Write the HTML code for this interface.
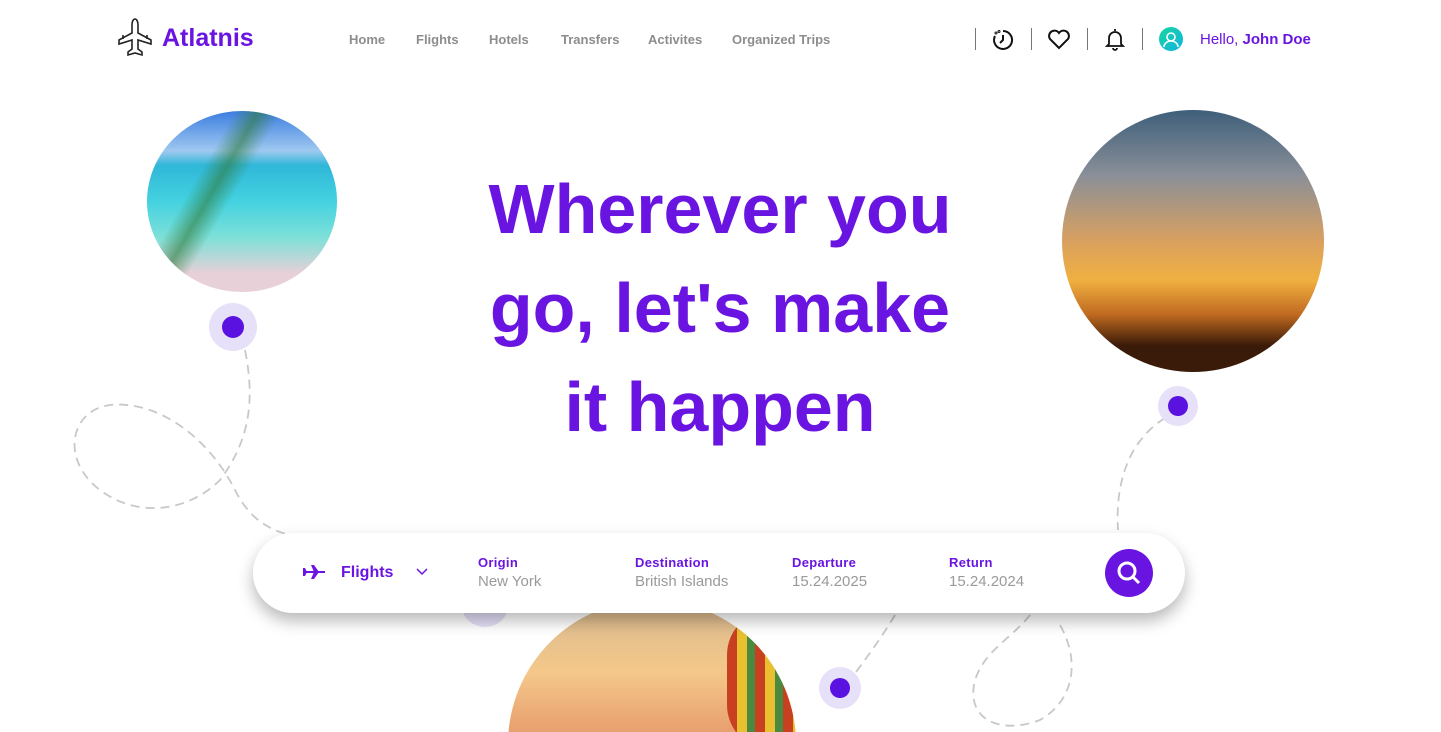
<!DOCTYPE html>
<html style="width:1441px;height:732px;overflow:hidden"><head><meta charset="utf-8"><style>
*{margin:0;padding:0;box-sizing:border-box}
body{width:1441px;height:732px;overflow:hidden;background:#fff;font-family:"Liberation Sans",sans-serif;position:relative}
.abs{position:absolute}
.nav a{position:absolute;top:32px;font-size:13px;font-weight:bold;color:#8d8d8d}
.sep{position:absolute;top:28px;width:1px;height:22px;background:#777}
.circ{position:absolute;border-radius:50%;overflow:hidden}
.dot{position:absolute;border-radius:50%;background:#e6e0f8}
.dot i{position:absolute;left:50%;top:50%;width:22px;height:22px;margin:-11px 0 0 -11px;border-radius:50%;background:#5a12e0}
h1{position:absolute;left:400px;width:640px;top:160px;text-align:center;color:#6a14e2;font-size:70px;line-height:99px;font-weight:bold}
.lbl{position:absolute;top:555px;font-size:13px;font-weight:bold;color:#6a14e2;letter-spacing:.3px}
.val{position:absolute;top:573px;font-size:15px;color:#9a9a9a}
</style></head><body>
<svg class="abs" style="left:0;top:0" width="1441" height="732" fill="none" stroke="#c8c8c8" stroke-width="1.8" stroke-dasharray="9 6">
<path d="M245 350 C255 400 250 440 220 480 C190 510 140 520 100 490 C60 460 70 410 110 405 C160 400 210 440 235 490 C250 520 270 530 290 535"/>
<path d="M1165 418 C1130 440 1115 480 1118 530"/>
<path d="M895 615 C880 640 865 660 850 680"/>
<path d="M1030 615 C1010 640 985 650 975 680 C965 720 1000 735 1040 720 C1075 700 1080 660 1060 625"/>
</svg>
<svg class="abs" style="left:116px;top:17px" width="38" height="40" viewBox="0 0 38 40" fill="none" stroke="#222" stroke-width="1.6"><path d="M19 2c-2 0-3 3-3 6v8L3 23v4l13-4v9l-4 3v3l7-2 7 2v-3l-4-3v-9l13 4v-4L22 16V8c0-3-1-6-3-6z"/><path d="M7 18v4M31 18v4"/></svg>
<div class="abs" style="left:162px;top:24px;font-size:25px;font-weight:bold;color:#6a14e2">Atlatnis</div>
<div class="nav"><a style="left:349px">Home</a><a style="left:416px">Flights</a><a style="left:489px">Hotels</a><a style="left:561px">Transfers</a><a style="left:648px">Activites</a><a style="left:732px">Organized Trips</a></div>
<div class="sep" style="left:975px"></div><div class="sep" style="left:1031px"></div><div class="sep" style="left:1087px"></div><div class="sep" style="left:1142px"></div>
<svg class="abs" style="left:991px;top:28px" width="24" height="24" viewBox="0 0 24 24" fill="none" stroke="#111" stroke-width="2"><path d="M12 3a9 9 0 1 1-8 5" /><path d="M12 7v5l-3 3"/><circle cx="5" cy="5" r=".5"/><circle cx="8" cy="3.5" r=".5"/></svg>
<svg class="abs" style="left:1047px;top:28px" width="24" height="22" viewBox="0 0 24 22" fill="none" stroke="#111" stroke-width="2"><path d="M12 20L3 11a5 5 0 0 1 9-6 5 5 0 0 1 9 6z"/></svg>
<svg class="abs" style="left:1104px;top:27px" width="22" height="24" viewBox="0 0 22 24" fill="none" stroke="#111" stroke-width="1.8"><path d="M11 2v2M5 17V11a6 6 0 0 1 12 0v6l2 2H3z"/><path d="M9 21a2 2 0 0 0 4 0"/></svg>
<div class="abs" style="left:1159px;top:27px;width:24px;height:24px;border-radius:50%;background:linear-gradient(135deg,#17d6a0,#12b3e0)"></div>
<svg class="abs" style="left:1159px;top:27px" width="24" height="24" fill="none" stroke="#fff" stroke-width="1.6"><circle cx="12" cy="10" r="4"/><path d="M5 20a7 6 0 0 1 14 0"/></svg>
<div class="abs" style="left:1200px;top:31px;font-size:15px;color:#6a14e2">Hello, <b>John Doe</b></div>
<div class="circ" style="left:147px;top:111px;width:190px;height:181px;background:linear-gradient(180deg,#3c7ee0 0%,#9fc8f0 22%,#2fb7d8 30%,#44d2e0 50%,#7ee0d8 70%,#e8d0d8 90%);"></div>
<div class="circ" style="left:147px;top:111px;width:190px;height:181px;background:linear-gradient(120deg,transparent 30%,#2f7a3a 38%,transparent 46%);opacity:.6"></div>
<div class="circ" style="left:1062px;top:110px;width:262px;height:262px;background:linear-gradient(180deg,#3e5f7a 0%,#8a8f98 25%,#d9a060 50%,#f0b040 65%,#c06a20 78%,#3a1a08 90%)"></div>
<div class="abs" style="left:508px;top:600px;width:288px;height:132px;overflow:hidden">
<div class="circ" style="left:0;top:0;width:288px;height:288px;background:linear-gradient(180deg,#d8b890 0%,#f4c88a 25%,#e9a070 45%,#c8b8c8 70%)">
<div class="abs" style="left:219px;top:10px;width:90px;height:140px;border-radius:45px;background:repeating-linear-gradient(90deg,#c84020 0 10px,#e8c030 10px 20px,#4a8a40 20px 28px)"></div>
</div></div>
<div class="dot" style="left:209px;top:303px;width:48px;height:48px"><i></i></div>
<div class="dot" style="left:1158px;top:386px;width:40px;height:40px"><i style="width:20px;height:20px;margin:-10px 0 0 -10px"></i></div>
<div class="dot" style="left:819px;top:667px;width:42px;height:42px"><i style="width:20px;height:20px;margin:-10px 0 0 -10px"></i></div>
<div class="dot" style="left:462px;top:585px;width:46px;height:42px"></div>
<h1>Wherever you<br>go, let's make<br>it happen</h1>
<div class="abs" style="left:253px;top:533px;width:932px;height:80px;border-radius:40px;background:#fff;box-shadow:0 8px 16px rgba(0,0,0,.28)"></div>
<svg class="abs" style="left:302px;top:564px" width="24" height="16" viewBox="0 0 24 16" fill="#6a14e2"><path d="M1 7h22v2H1zM9 1h3l5 7-5 7H9l3-7zM1 4h2l2 4-2 4H1z"/></svg>
<div class="abs" style="left:341px;top:564px;font-size:16px;font-weight:bold;color:#6a14e2">Flights</div>
<svg class="abs" style="left:415px;top:567px" width="14" height="10" fill="none" stroke="#6a14e2" stroke-width="1.5"><path d="M2 2l5 5 5-5"/></svg>
<div class="lbl" style="left:478px">Origin</div><div class="val" style="left:478px">New York</div>
<div class="lbl" style="left:635px">Destination</div><div class="val" style="left:635px">British Islands</div>
<div class="lbl" style="left:792px">Departure</div><div class="val" style="left:792px">15.24.2025</div>
<div class="lbl" style="left:949px">Return</div><div class="val" style="left:949px">15.24.2024</div>
<div class="abs" style="left:1105px;top:549px;width:48px;height:48px;border-radius:50%;background:#6a14e2"></div>
<svg class="abs" style="left:1105px;top:549px" width="48" height="48" fill="none" stroke="#fff" stroke-width="3"><circle cx="22" cy="22" r="8"/><path d="M28 28l6 6"/></svg>
</body></html>
